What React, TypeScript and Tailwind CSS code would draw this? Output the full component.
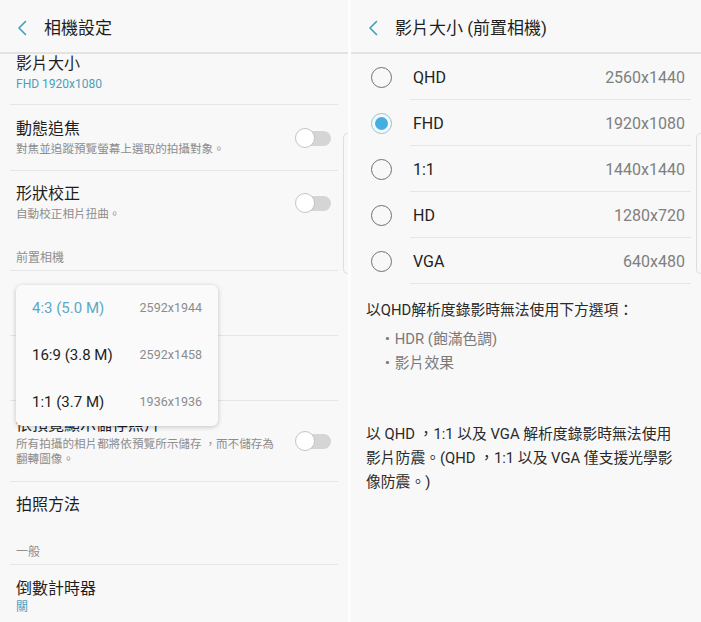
import React from "react"

const teal = "text-[#4a9fbd]"

function Chevron() {
    return (
        <svg width="10" height="16" viewBox="0 0 10 16" fill="none">
            <polyline points="8.5,1.5 2,8 8.5,14.5" stroke="#3f9fb8" strokeWidth="1.6" strokeLinecap="round" strokeLinejoin="round" />
        </svg>
    )
}

function Header({ title }: { title: string }) {
    return (
        <div className="h-[54px] shrink-0 flex items-center pt-[4px] border-b-2 border-[#e3e3e3] bg-[#f8f8f8]">
            <div className="pl-[17px] flex items-center">
                <Chevron />
            </div>
            <div className="ml-[17px] text-[17px] text-[#1e1e1e] leading-5">{title}</div>
        </div>
    )
}

function Toggle() {
    return (
        <div className="relative w-[36px] h-[20px] shrink-0 mr-[17px]">
            <div className="absolute left-[2px] right-0 top-[3px] h-[15px] rounded-full bg-[#d5d5d5]" />
            <div className="absolute left-0 top-0 w-[20px] h-[20px] rounded-full bg-white border border-[#c4c4c4]" />
        </div>
    )
}

function Divider() {
    return <div className="h-px bg-[#e6e6e6] mx-[10px] shrink-0" />
}

type RowProps = {
    title: string
    sub?: React.ReactNode
    subTeal?: boolean
    toggle?: boolean
    pt?: string
    pb?: string
    subLead?: string
    hidden?: boolean
}

function Row({ title, sub, subTeal, toggle, pt = "pt-[14px]", pb = "pb-[13px]", subLead = "mt-[2px] leading-4", hidden }: RowProps) {
    return (
        <div className={`flex items-center pl-[16px] ${pt} ${pb} ${hidden ? "invisible" : ""}`}>
            <div className="flex-1">
                <div className="text-[16px] leading-5 text-[#1e1e1e]">{title}</div>
                {sub ? (
                    <div className={`whitespace-nowrap ${subLead} ${subTeal ? `text-[12px] ${teal}` : "text-[11.6px] text-[#8d8d8d]"}`}>{sub}</div>
                ) : null}
            </div>
            {toggle ? <Toggle /> : null}
        </div>
    )
}

function Section({ label, pt }: { label: string, pt: string }) {
    return (
        <div className={`pl-[16px] ${pt} pb-[4px] text-[12px] leading-4 text-[#8f8f8f]`}>{label}</div>
    )
}

function EdgeHandle() {
    return <div className="absolute right-0 top-[133px] w-[5px] h-[141px] rounded-l-[6px] border border-r-0 border-[#dedede]" />
}

const photoSizes = [
    { label: "4:3 (5.0 M)", value: "2592x1944", active: true },
    { label: "16:9 (3.8 M)", value: "2592x1458" },
    { label: "1:1 (3.7 M)", value: "1936x1936" },
]

function LeftPanel() {
    return (
        <div className="relative w-[348px] h-full flex flex-col bg-[#f8f8f8] overflow-hidden">
            <Header title="相機設定" />
            <Row title="影片大小" sub="FHD 1920x1080" subTeal pt="pt-0" pb="pb-[12px]" />
            <Divider />
            <Row title="動態追焦" sub="對焦並追蹤預覽螢幕上選取的拍攝對象。" toggle />
            <Divider />
            <Row title="形狀校正" sub="自動校正相片扭曲。" toggle pt="pt-[13px]" pb="pb-[14px]" />
            <Section label="前置相機" pt="pt-[14px]" />
            <Divider />
            <Row title="相片大小" sub="4:3 (5.0 M) 2592x1944" subTeal pb="pb-[12px]" hidden />
            <Divider />
            <Row title="影片大小" sub="FHD 1920x1080" subTeal pb="pb-[12px]" hidden />
            <Divider />
            <Row
                title="依預覽顯示儲存照片"
                sub={<>所有拍攝的相片都將依預覽所示儲存 ，而不儲存為<br />翻轉圖像。</>}
                subLead="mt-[2px] leading-[15px]"
                toggle
                pb="pb-[14px]"
            />
            <Divider />
            <Row title="拍照方法" pt="pt-[13px]" pb="pb-[14px]" />
            <Section label="一般" pt="pt-[15px]" />
            <Divider />
            <Row title="倒數計時器" sub="關" subTeal subLead="mt-0 leading-4" />
            <EdgeHandle />

            <div className="absolute left-[16px] top-[285px] w-[202px] rounded-[6px] bg-[#fafafa] shadow-[0_1px_5px_rgba(0,0,0,0.22)] flex flex-col">
                {photoSizes.map((s) => (
                    <div key={s.label} className="h-[47px] flex items-center justify-between px-[16px]">
                        <span className={`text-[15px] ${s.active ? "text-[#5aa8c6]" : "text-[#1e1e1e]"}`}>{s.label}</span>
                        <span className="text-[12.5px] text-[#8c8c8c]">{s.value}</span>
                    </div>
                ))}
            </div>
        </div>
    )
}

const videoSizes = [
    { label: "QHD", value: "2560x1440" },
    { label: "FHD", value: "1920x1080", selected: true },
    { label: "1:1", value: "1440x1440" },
    { label: "HD", value: "1280x720" },
    { label: "VGA", value: "640x480" },
]

function Radio({ on }: { on?: boolean }) {
    if (on) {
        return (
            <div className="w-[21px] h-[21px] rounded-full border-[1.5px] border-[#86c6dd] flex items-center justify-center">
                <div className="w-[13px] h-[13px] rounded-full bg-[#45aee0]" />
            </div>
        )
    }
    return <div className="w-[21px] h-[21px] rounded-full border-[1.5px] border-[#707070]" />
}

function RightPanel() {
    return (
        <div className="relative flex-1 h-full flex flex-col bg-[#f8f8f8] overflow-hidden">
            <Header title="影片大小 (前置相機)" />
            <div className="flex flex-col">
                {videoSizes.map((v) => (
                    <div key={v.label} className="h-[46px] flex items-center pl-[20px]">
                        <Radio on={v.selected} />
                        <div className="flex-1 h-full flex items-center justify-between ml-[18px] mr-[10px] pr-[6px] pt-[2px] border-b border-[#e6e6e6]">
                            <span className="ml-[3px] text-[16px] text-[#1e1e1e]">{v.label}</span>
                            <span className="text-[16px] text-[#7f7f7f]">{v.value}</span>
                        </div>
                    </div>
                ))}
            </div>
            <div className="px-[15px] pt-[14px] text-[14.8px] leading-6 text-[#2a2a2a]">
                <div className="mb-[5px]">以QHD解析度錄影時無法使用下方選項：</div>
                <div className="pl-[14px] text-[#7a7a7a]">
                    <div>・HDR (飽滿色調)</div>
                    <div>・影片效果</div>
                </div>
                <div className="mt-[47px] whitespace-nowrap">
                    以 QHD ，1:1 以及 VGA 解析度錄影時無法使用<br />
                    影片防震。(QHD ，1:1 以及 VGA 僅支援光學影<br />
                    像防震。)
                </div>
            </div>
            <EdgeHandle />
        </div>
    )
}

export default function App() {
    return (
        <div className="w-[701px] h-[622px] flex bg-[#fdfdfd] font-['Roboto','Noto_Sans_CJK_TC',sans-serif]">
            <LeftPanel />
            <div className="w-[3px] shrink-0" />
            <RightPanel />
        </div>
    )
}
